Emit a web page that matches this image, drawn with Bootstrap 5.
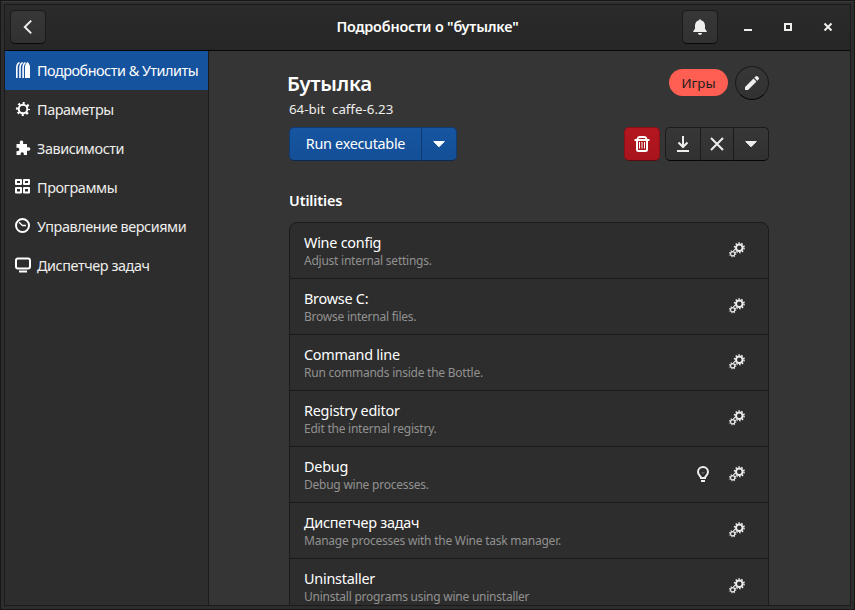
<!DOCTYPE html>
<html lang="ru" data-bs-theme="dark">
<head>
<meta charset="utf-8">
<meta name="viewport" content="width=device-width, initial-scale=1">
<title>Подробности о "бутылке"</title>
<link href="https://cdn.jsdelivr.net/npm/bootstrap@5.3.0/dist/css/bootstrap.min.css" rel="stylesheet">
<style>
:root { --line:#1b1b1b; --panel:#2d2d2d; --view:#353535; --ink:#eeeeec; --accent:#15539e; }
html, body { height:100%; }
body { font-family:"Noto Sans","Open Sans",sans-serif; font-size:14.4px; line-height:20px; color:var(--ink); background:#2d2d2d; overflow:hidden; }
svg { display:block; flex:none; }
.frame { width:855px; height:610px; padding:3px; border:1px solid #161616; background:#2d2d2d; box-shadow:inset 0 1px #3a3a3a; }
.window { border:1px solid var(--line); background:var(--view); }
.topbar { height:46px; padding:5px 5px 0; border-bottom:1px solid #070707; background:linear-gradient(#2b2b2b,#262626); display:grid; grid-template-columns:1fr auto 1fr; align-items:start; flex:none; }
.topbar h1 { font-size:14.4px; line-height:34px; font-weight:600; margin:0; letter-spacing:-.18px; }
.gtk { --bs-btn-color:#eeeeec; --bs-btn-bg:transparent; --bs-btn-border-color:#1b1b1b; --bs-btn-hover-bg:#3a3a3a; --bs-btn-hover-border-color:#1b1b1b; --bs-btn-border-radius:5px; --bs-btn-padding-x:0; --bs-btn-padding-y:0; height:34px; width:36px; display:flex; align-items:center; justify-content:center; background-image:linear-gradient(#373737,#313131); border-bottom-color:#070707; font-size:14.4px; }
.wbtn { width:40px; height:34px; }
.wctl { margin-right:-3px; }
.bell { margin-right:10px; }
.side { width:204px; background:var(--panel); border-right:1px solid var(--line); }
.side .nav-link { height:39px; padding:1px 0 0 10px; gap:6px; color:var(--ink); border-radius:0; white-space:nowrap; letter-spacing:-.42px; }
.side .nav-link svg { margin-bottom:2px; }
.side .nav-link.active { background:var(--accent); color:#fff; letter-spacing:-.48px; }
.content { width:480px; margin-left:80px; padding-top:15px; }
.content h2 { font-size:20.4px; line-height:28px; font-weight:600; margin:3px 0 0 -2px; color:#fff; letter-spacing:-.2px; }
.meta { font-size:13.33px; line-height:20px; gap:7px; margin-top:2px; }
.tag { font-size:13.33px; font-weight:400; line-height:28px; height:27px; width:59px; padding:0; margin:3px 7px 0 0; color:#1c1c1c; background:#ff5f52; }
.round { width:34px; border-radius:50%; }
.blue { --bs-btn-border-color:#0f3b71; background-image:linear-gradient(#1655a1,#144f97); border-bottom-color:#0a2a50; color:#fff; }
.red { --bs-btn-border-color:#8a1018; background-image:linear-gradient(#b4161f,#a8141c); border-bottom-color:#570a0f; }
.tools { margin-top:8px; }
.acts-group { gap:5px; }
.run { width:133px; letter-spacing:-.3px; }
.prefs-title { font-size:14.4px; font-weight:600; line-height:20px; margin:30px 0 11px; letter-spacing:-.1px; }
.prefs { --bs-list-group-bg:#2d2d2d; --bs-list-group-border-color:#1b1b1b; --bs-list-group-color:#fff; --bs-list-group-border-radius:8px; letter-spacing:-.24px; }
.prefs .list-group-item { height:56px; padding:10px 23px 0 14px; }
.prefs .list-group-item:first-child { height:57px; }
.sub { font-size:12px; line-height:16px; color:#919190; }
.acts { gap:18px; padding-top:9px; }
</style>
</head>
<body>
<svg width="0" height="0" class="position-absolute" aria-hidden="true">
 <symbol id="gears" viewBox="0 0 16 16">
  <g fill="none" stroke="#eeeeec">
   <circle cx="10.300" cy="5.800" r="3.300" stroke-width="2"/>
   <circle cx="10.300" cy="5.800" r="4.800" stroke-width="1.500" stroke-dasharray="1.508 1.508"/>
   <circle cx="3.700" cy="11.700" r="2.100" stroke-width="1.200"/>
   <circle cx="3.700" cy="11.700" r="3.100" stroke-width="1.100" stroke-dasharray="1.217 1.217"/>
  </g>
 </symbol>
 <symbol id="down" viewBox="0 0 16 16"><path d="M2.700 5.500h10.600L8 10.800z" fill="currentColor" stroke="currentColor" stroke-width="1" stroke-linejoin="round"/></symbol>
</svg>
<div class="frame">
<div class="window d-flex flex-column h-100 overflow-hidden">
 <header class="topbar">
  <button class="btn gtk" aria-label="Back"><svg width="16" height="16" viewBox="0 0 16 16"><path d="M11.200 1.600 4.800 8l6.400 6.400" fill="none" stroke="#eeeeec" stroke-width="2"/></svg></button>
  <h1>Подробности о "бутылке"</h1>
  <div class="wctl d-flex justify-content-end">
   <button class="btn gtk bell" aria-label="Notifications"><svg width="16" height="16" viewBox="0 0 16 16"><path d="M7.500 0h1v1C11 1.500 13 3.500 13 6.500v3.200l1.700 2.300v1H1.300v-1L3 9.700V6.500C3 3.500 5 1.500 7.500 1zM6 14h4c0 1.300-.9 2-2 2s-2-.7-2-2z" fill="#eeeeec"/></svg></button>
   <span class="wbtn d-flex align-items-center justify-content-center"><svg width="16" height="16" viewBox="0 0 16 16"><path d="M4 10h8v2H4z" fill="#eeeeec"/></svg></span>
   <span class="wbtn d-flex align-items-center justify-content-center"><svg width="16" height="16" viewBox="0 0 16 16"><path d="M5 5h6v6H5z" fill="none" stroke="#eeeeec" stroke-width="2"/></svg></span>
   <span class="wbtn d-flex align-items-center justify-content-center"><svg width="16" height="16" viewBox="0 0 16 16"><path d="m4.500 4.500 7 7m0-7-7 7" stroke="#eeeeec" stroke-width="2"/></svg></span>
  </div>
 </header>
 <div class="d-flex flex-grow-1 overflow-hidden">
  <nav class="side nav flex-column flex-nowrap flex-shrink-0">
   <a class="nav-link active d-flex align-items-center"><svg width="16" height="16" viewBox="0 0 16 16"><path d="M10 16V5c.1-2 1-4 2.500-5C14 1 14.900 3 15 5v11z" fill="#fff"/><path d="M1.800 16V6.500C1.800 3.500 2.800 1.200 4.500.7M5 16V6.500C5 3.500 6 1.200 7.700.7M8.100 16V6.500C8.100 3.500 9 1.200 10.500.7" fill="none" stroke="#fff" stroke-width="1.600"/></svg>Подробности &amp; Утилиты</a>
   <a class="nav-link d-flex align-items-center"><svg width="16" height="16" viewBox="0 0 16 16"><g fill="none" stroke="#fff"><circle cx="8" cy="8" r="4.300" stroke-width="2"/><circle cx="8" cy="8" r="6" stroke-width="2.200" stroke-dasharray="2.100 2.612" stroke-dashoffset="1.050"/></g></svg>Параметры</a>
   <a class="nav-link d-flex align-items-center"><svg width="16" height="16" viewBox="0 0 16 16"><path d="M1.500 4H5C4.300 2 5 .5 6.500.5S8.700 2 8 4h4v3.500c1.800-.7 3.300 0 3.300 1.500s-1.500 2.200-3.300 1.500V15H8.800c.4-1.700-.3-2.800-1.600-2.800S5.300 13.300 5.700 15H1.500v-4c1.700.5 2.800-.2 2.800-1.500S3.200 7.500 1.500 8z" fill="#fff"/></svg>Зависимости</a>
   <a class="nav-link d-flex align-items-center"><svg width="16" height="16" viewBox="0 0 16 16"><path d="M1 1h5v4H1zM9 1h5v4H9zM1 9h5v4.500H1zM9 9h5v4.500H9z" fill="none" stroke="#fff" stroke-width="2" stroke-linejoin="round"/></svg>Программы</a>
   <a class="nav-link d-flex align-items-center"><svg width="16" height="16" viewBox="0 0 16 16"><circle cx="7.500" cy="7.500" r="6.500" fill="none" stroke="#fff" stroke-width="2"/><path d="M4 4.300 7.500 7.500H11" fill="none" stroke="#fff" stroke-width="1.300"/></svg>Управление версиями</a>
   <a class="nav-link d-flex align-items-center"><svg width="16" height="16" viewBox="0 0 16 16"><rect x="1" y="1.500" width="14" height="10" rx="2" fill="none" stroke="#fff" stroke-width="2"/><path d="M4 13.500h8v2H4z" fill="#fff"/></svg>Диспетчер задач</a>
  </nav>
  <main class="content flex-shrink-0">
   <div class="d-flex justify-content-between align-items-start">
    <div>
     <h2>Бутылка</h2>
     <div class="meta d-flex"><span>64-bit</span><span>caffe-6.23</span></div>
    </div>
    <div class="d-flex">
     <span class="badge rounded-pill tag">Игры</span>
     <button class="btn gtk round" aria-label="Edit"><svg width="16" height="16" viewBox="0 0 16 16"><path d="M1 12 9.500 3.500l3 3L4 15H1zM10.300 2.700l1.200-1.200c.7-.7 1.500-.7 2.100-.1l1 1c.6.6.6 1.400-.1 2.100l-1.200 1.200z" fill="#eeeeec"/></svg></button>
    </div>
   </div>
   <div class="tools d-flex justify-content-between">
    <div class="btn-group">
     <button class="btn gtk blue run flex-grow-0">Run executable</button>
     <button class="btn gtk blue flex-grow-0" aria-label="More"><svg width="16" height="16"><use href="#down"/></svg></button>
    </div>
    <div class="acts-group d-flex">
     <button class="btn gtk red" aria-label="Delete"><svg width="16" height="16" viewBox="0 0 16 16"><g fill="none" stroke="#fff"><path d="M.5 4h15" stroke-width="2"/><path d="M3.500 3Q4 1 5.500 1h5Q12 1 12.500 3" stroke-width="2"/><path d="M3 5v8.500Q3 15 4.500 15h7q1.500 0 1.500-1.500V5" stroke-width="2"/><path d="M5.500 6v6.500M8 6v6.500M10.500 6v6.500"/></g></svg></button>
     <div class="btn-group">
      <button class="btn gtk flex-grow-0" aria-label="Backup"><svg width="16" height="16" viewBox="0 0 16 16"><path d="M8 0v11M3.500 6.500 8 11l4.500-4.500M2 15h12" fill="none" stroke="#eeeeec" stroke-width="2"/></svg></button>
      <button class="btn gtk round rounded-0 flex-grow-0" aria-label="Stop"><svg width="16" height="16" viewBox="0 0 16 16"><path d="m2 2 12 12M14 2 2 14" stroke="#eeeeec" stroke-width="2"/></svg></button>
      <button class="btn gtk flex-grow-0" aria-label="More"><svg width="16" height="16"><use href="#down"/></svg></button>
     </div>
    </div>
   </div>
   <h3 class="prefs-title">Utilities</h3>
   <div class="list-group prefs">
    <div class="list-group-item d-flex justify-content-between"><div><div>Wine config</div><div class="sub">Adjust internal settings.</div></div><div class="acts d-flex"><svg width="16" height="16"><use href="#gears"/></svg></div></div>
    <div class="list-group-item d-flex justify-content-between"><div><div>Browse C:</div><div class="sub">Browse internal files.</div></div><div class="acts d-flex"><svg width="16" height="16"><use href="#gears"/></svg></div></div>
    <div class="list-group-item d-flex justify-content-between"><div><div>Command line</div><div class="sub">Run commands inside the Bottle.</div></div><div class="acts d-flex"><svg width="16" height="16"><use href="#gears"/></svg></div></div>
    <div class="list-group-item d-flex justify-content-between"><div><div>Registry editor</div><div class="sub">Edit the internal registry.</div></div><div class="acts d-flex"><svg width="16" height="16"><use href="#gears"/></svg></div></div>
    <div class="list-group-item d-flex justify-content-between"><div><div>Debug</div><div class="sub">Debug wine processes.</div></div><div class="acts d-flex"><svg width="16" height="16" viewBox="0 0 16 16"><path d="M8 1a5 5 0 0 0-5 5c0 2.200 1.300 3.300 2.300 4.400.5.600.7 1 .7 1.600h4c0-.600.2-1 .7-1.600C11.700 9.300 13 8.200 13 6a5 5 0 0 0-5-5z" fill="none" stroke="#eeeeec" stroke-width="2"/><path d="M6 14h4v2H6z" fill="#eeeeec"/><path d="M6 6h4L8 8.500z" fill="#5a5a5a"/></svg><svg width="16" height="16"><use href="#gears"/></svg></div></div>
    <div class="list-group-item d-flex justify-content-between"><div><div>Диспетчер задач</div><div class="sub">Manage processes with the Wine task manager.</div></div><div class="acts d-flex"><svg width="16" height="16"><use href="#gears"/></svg></div></div>
    <div class="list-group-item d-flex justify-content-between"><div><div>Uninstaller</div><div class="sub">Uninstall programs using wine uninstaller</div></div><div class="acts d-flex"><svg width="16" height="16"><use href="#gears"/></svg></div></div>
   </div>
  </main>
 </div>
</div>
</div>
<script src="https://cdn.jsdelivr.net/npm/bootstrap@5.3.0/dist/js/bootstrap.bundle.min.js"></script>
</body>
</html>
